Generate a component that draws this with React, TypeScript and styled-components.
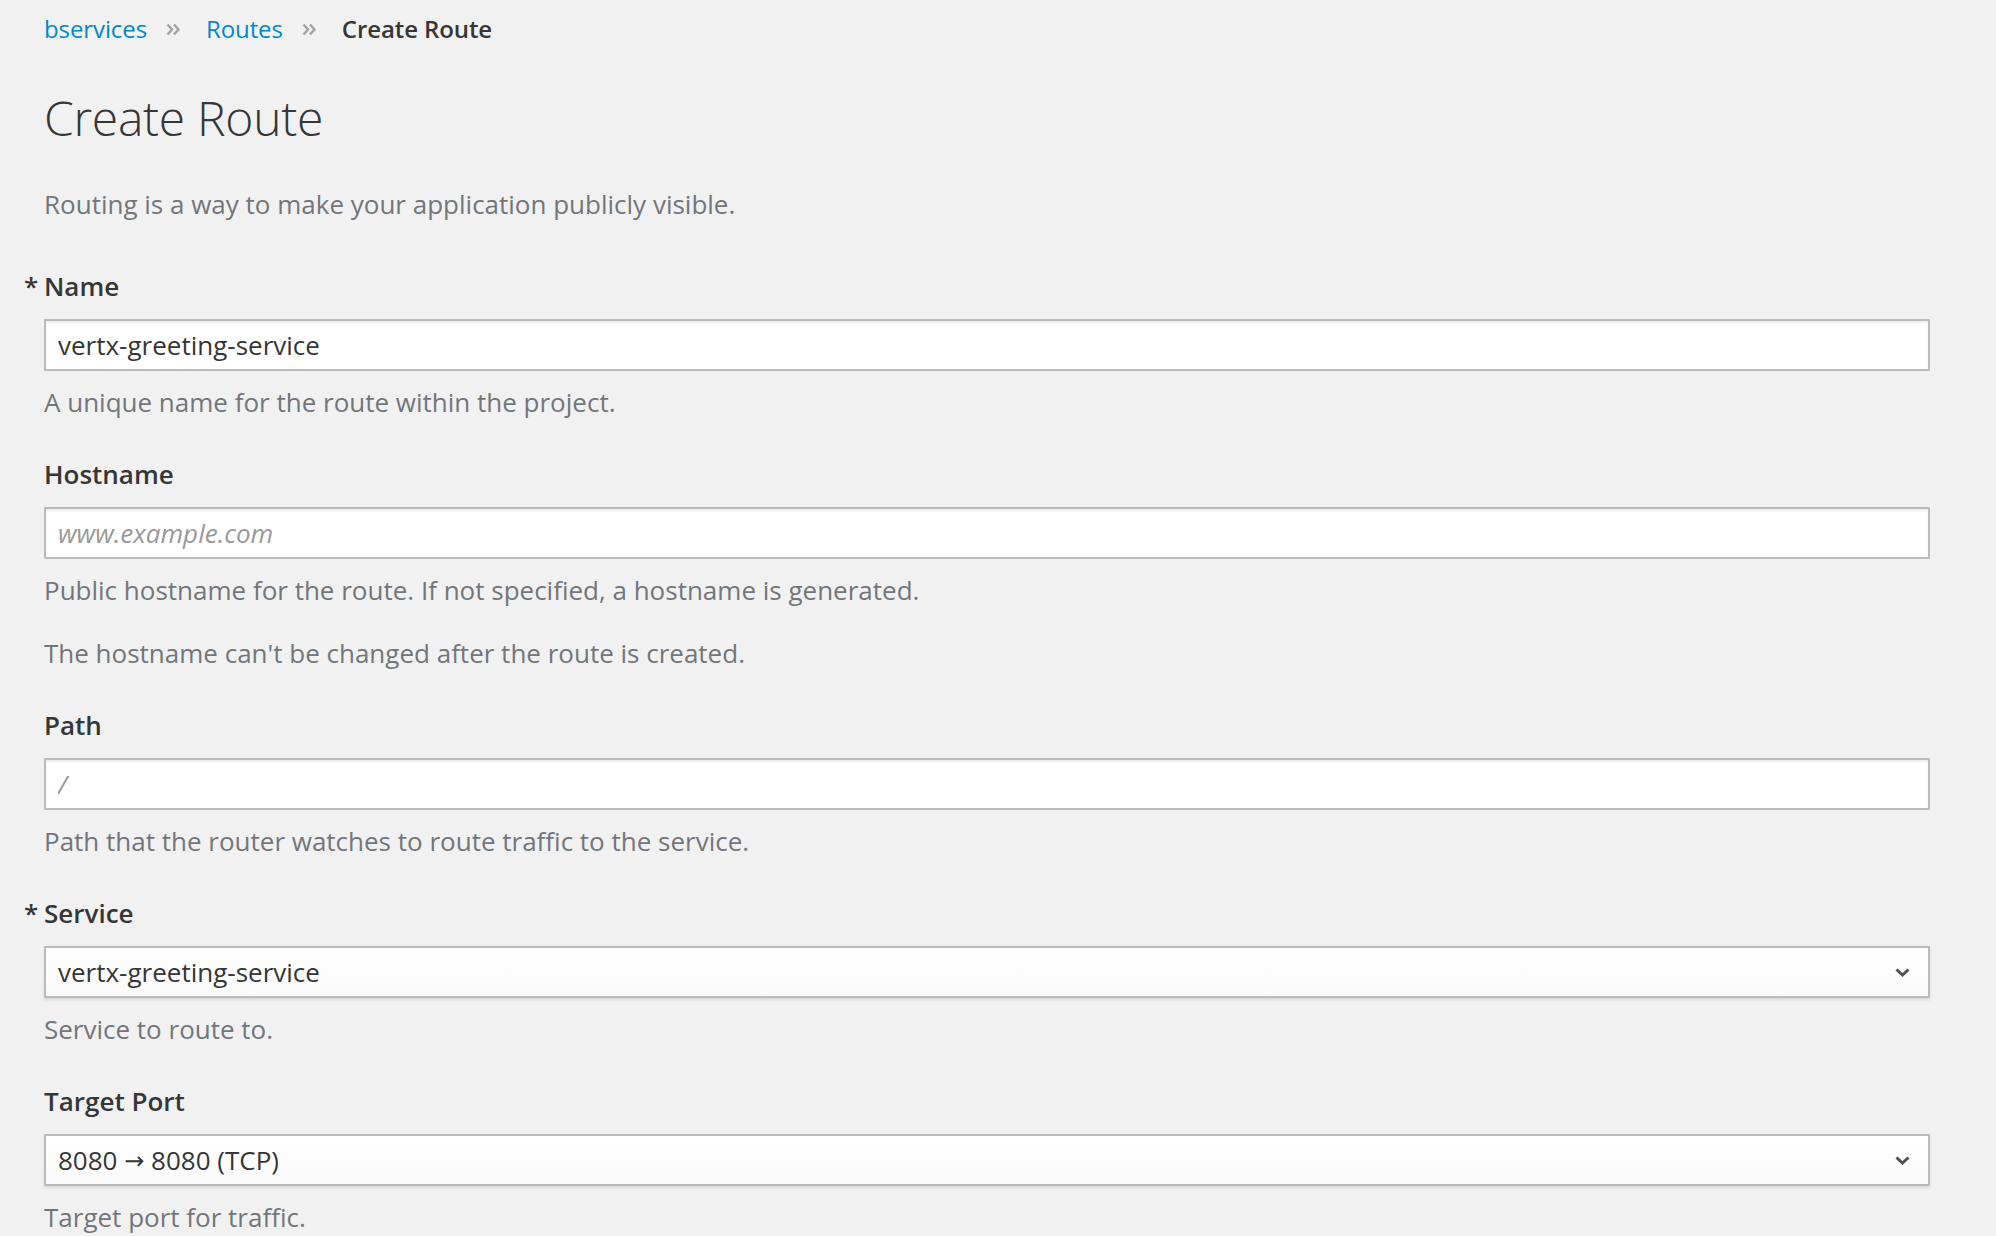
import React from "react";
import styled, { createGlobalStyle } from "styled-components";

const GlobalStyle = createGlobalStyle`
  html, body {
    margin: 0;
    padding: 0;
    background: #f1f1f1;
  }
  body {
    font-family: "Open Sans", "Noto Sans", "Liberation Sans", sans-serif;
    color: #363636;
    -webkit-font-smoothing: antialiased;
  }
`;

const Page = styled.div`
  min-height: 1236px;
  box-sizing: border-box;
  padding: 11px 66px 0 44px;
  background: #f1f1f1;
`;

const Breadcrumb = styled.nav`
  display: flex;
  align-items: center;
  font-size: 24px;
  line-height: 36px;
  height: 36px;
  letter-spacing: -0.1px;
`;

const Crumb = styled.a`
  color: #0088ce;
  text-decoration: none;
  font-weight: 400;
`;

const CrumbCurrent = styled.span`
  color: #363636;
  font-weight: 600;
`;

const Sep = styled.span<{ $before: number; $after: number }>`
  display: inline-flex;
  align-items: center;
  margin: 0 ${(p) => p.$after}px 0 ${(p) => p.$before}px;
  color: #a3a3a3;
`;

const Title = styled.h1`
  margin: 42px 0 0;
  font-size: 48px;
  line-height: 58px;
  font-weight: 300;
  color: #363636;
  letter-spacing: -0.3px;
`;

const Intro = styled.p`
  margin: 39px 0 0;
  font-size: 26px;
  line-height: 36px;
  color: #72767b;
`;

const Form = styled.form`
  display: flex;
  flex-direction: column;
  gap: 36px;
  margin-top: 46px;
`;

const Group = styled.div`
  display: flex;
  flex-direction: column;
`;

const Label = styled.label`
  display: block;
  font-size: 26px;
  line-height: 36px;
  font-weight: 600;
  color: #363636;
  margin-bottom: 15px;
`;

const Required = styled.span`
  display: inline-block;
  width: 20px;
  margin-left: -20px;
  font-weight: 600;
`;

const TextInput = styled.input`
  box-sizing: border-box;
  width: 100%;
  height: 52px;
  margin: 0;
  padding: 0 12px;
  border: 2px solid #bbbbbb;
  border-radius: 1px;
  background: #fff;
  box-shadow: inset 0 2px 2px rgba(3, 3, 3, 0.075);
  font-family: "Open Sans", "Noto Sans", "Liberation Sans", sans-serif;
  font-size: 26px;
  color: #363636;
  outline: none;
  &::placeholder {
    color: #999;
    font-style: italic;
    opacity: 1;
  }
`;

const SelectBox = styled.div`
  box-sizing: border-box;
  width: 100%;
  height: 52px;
  padding: 0 18px 0 12px;
  border: 2px solid #bbbbbb;
  border-radius: 1px;
  background: linear-gradient(to bottom, #ffffff 0%, #fafafa 100%);
  box-shadow: 0 2px 3px rgba(3, 3, 3, 0.1);
  display: flex;
  align-items: center;
  justify-content: space-between;
  font-size: 26px;
  color: #363636;
`;

const SelectText = styled.span`
  white-space: pre;
`;

const Arrow = styled.span`
  font-family: "DejaVu Sans", "Liberation Sans", sans-serif;
  font-size: 24px;
  vertical-align: 1px;
`;

const Help = styled.div`
  display: flex;
  flex-direction: column;
  gap: 27px;
  margin-top: 13px;
`;

const HelpLine = styled.p`
  margin: 0;
  font-size: 26px;
  line-height: 36px;
  color: #72767b;
`;

const DoubleChevron = () => (
  <svg width="15" height="13" viewBox="0 0 15 13" aria-hidden="true">
    <polyline points="1.5,1.5 6,6.5 1.5,11.5" fill="none" stroke="currentColor" strokeWidth="2.4" />
    <polyline points="8,1.5 12.5,6.5 8,11.5" fill="none" stroke="currentColor" strokeWidth="2.4" />
  </svg>
);

const Caret = () => (
  <svg width="15" height="9" viewBox="0 0 15 9" aria-hidden="true">
    <polyline points="1.5,1.5 7.5,7 13.5,1.5" fill="none" stroke="#4d5258" strokeWidth="3" />
  </svg>
);

type FieldProps = {
  label: string;
  required?: boolean;
  help: string[];
  children: React.ReactNode;
};

const Field = ({ label, required, help, children }: FieldProps) => (
  <Group>
    <Label>
      {required && <Required>*</Required>}
      {label}
    </Label>
    {children}
    <Help>
      {help.map((h) => (
        <HelpLine key={h}>{h}</HelpLine>
      ))}
    </Help>
  </Group>
);

export default function App() {
  return (
    <>
      <GlobalStyle />
      <Page>
        <Breadcrumb>
          <Crumb href="#">bservices</Crumb>
          <Sep $before={19} $after={25}>
            <DoubleChevron />
          </Sep>
          <Crumb href="#">Routes</Crumb>
          <Sep $before={19} $after={25}>
            <DoubleChevron />
          </Sep>
          <CrumbCurrent>Create Route</CrumbCurrent>
        </Breadcrumb>
        <Title>Create Route</Title>
        <Intro>Routing is a way to make your application publicly visible.</Intro>
        <Form onSubmit={(e) => e.preventDefault()}>
          <Field label="Name" required help={["A unique name for the route within the project."]}>
            <TextInput defaultValue="vertx-greeting-service" />
          </Field>
          <Field
            label="Hostname"
            help={[
              "Public hostname for the route. If not specified, a hostname is generated.",
              "The hostname can't be changed after the route is created.",
            ]}
          >
            <TextInput placeholder="www.example.com" />
          </Field>
          <Field label="Path" help={["Path that the router watches to route traffic to the service."]}>
            <TextInput placeholder="/" />
          </Field>
          <Field label="Service" required help={["Service to route to."]}>
            <SelectBox>
              <SelectText>vertx-greeting-service</SelectText>
              <Caret />
            </SelectBox>
          </Field>
          <Field label="Target Port" help={["Target port for traffic."]}>
            <SelectBox>
              <SelectText>
                {"8080 "}
                <Arrow>→</Arrow>
                {" 8080 (TCP)"}
              </SelectText>
              <Caret />
            </SelectBox>
          </Field>
        </Form>
      </Page>
    </>
  );
}
